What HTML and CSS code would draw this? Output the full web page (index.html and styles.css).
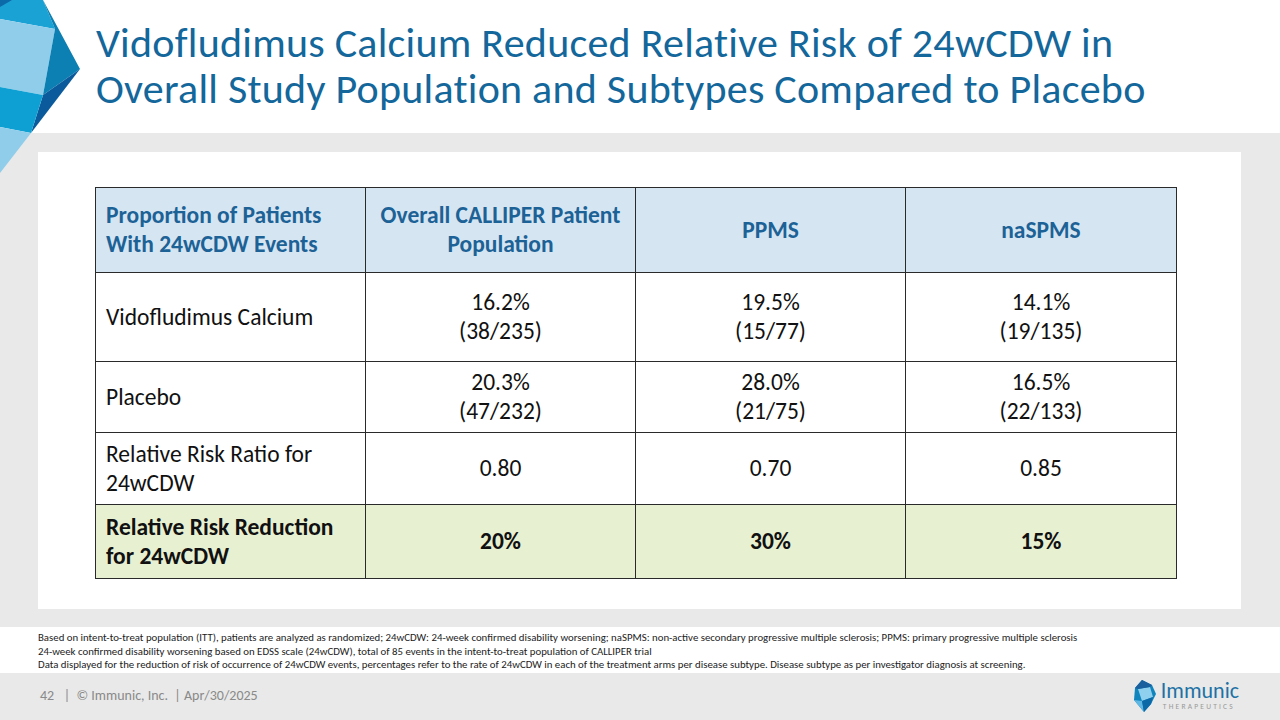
FILE: index.html
```html
<!DOCTYPE html>
<html>
<head>
<meta charset="utf-8">
<link rel="stylesheet" href="styles.css">
</head>
<body>
<div class="slide">
  <header class="top">
    <svg class="deco" width="90" height="180" viewBox="0 0 90 180">
      <polygon points="0,0 43,0 55,29 0,19" fill="#1ba2d5"/>
      <polygon points="0,0 12,0 0,7" fill="#0c6aa8"/>
      <polygon points="0,19 55,29 43,95 0,87" fill="#8fcdeb"/>
      <polygon points="55,29 43,0 80,69 43,95" fill="#0d80b3"/>
      <polygon points="43,95 80,69 31,133" fill="#0b5b9c"/>
      <polygon points="0,87 43,95 31,133 0,127" fill="#0fa0d3"/>
      <polygon points="0,127 31,133 0,173" fill="#8fcdeb"/>
    </svg>
    <h1 class="title">Vidofludimus Calcium Reduced Relative Risk of 24wCDW in<br>Overall Study Population and Subtypes Compared to Placebo</h1>
  </header>
  <main class="body">
    <section class="card">
      <table class="data">
        <colgroup>
          <col class="c1"><col class="c2"><col class="c3"><col class="c4">
        </colgroup>
        <thead>
          <tr class="r0">
            <th class="left">Proportion of Patients<br>With 24wCDW Events</th>
            <th>Overall CALLIPER Patient<br>Population</th>
            <th>PPMS</th>
            <th>naSPMS</th>
          </tr>
        </thead>
        <tbody>
          <tr class="r1">
            <td class="left">Vidofludimus Calcium</td>
            <td>16.2%<br>(38/235)</td>
            <td>19.5%<br>(15/77)</td>
            <td>14.1%<br>(19/135)</td>
          </tr>
          <tr class="r2">
            <td class="left">Placebo</td>
            <td>20.3%<br>(47/232)</td>
            <td>28.0%<br>(21/75)</td>
            <td>16.5%<br>(22/133)</td>
          </tr>
          <tr class="r3">
            <td class="left">Relative Risk Ratio for<br>24wCDW</td>
            <td>0.80</td>
            <td>0.70</td>
            <td>0.85</td>
          </tr>
          <tr class="r4">
            <td class="left">Relative Risk Reduction<br>for 24wCDW</td>
            <td>20%</td>
            <td>30%</td>
            <td>15%</td>
          </tr>
        </tbody>
      </table>
    </section>
  </main>
  <section class="notes">
    <p>Based on intent-to-treat population (ITT), patients are analyzed as randomized; 24wCDW: 24-week confirmed disability worsening; naSPMS: non-active secondary progressive multiple sclerosis; PPMS: primary progressive multiple sclerosis</p>
    <p>24-week confirmed disability worsening based on EDSS scale (24wCDW), total of 85 events in the intent-to-treat population of CALLIPER trial</p>
    <p>Data displayed for the reduction of risk of occurrence of 24wCDW events, percentages refer to the rate of 24wCDW in each of the treatment arms per disease subtype. Disease subtype as per investigator diagnosis at screening.</p>
  </section>
  <footer class="foot">
    <div class="pageinfo">42&nbsp;&nbsp; |&nbsp; © Immunic, Inc.&nbsp; | Apr/30/2025</div>
    <div class="logo">
      <svg class="logo-icon" width="22" height="32" viewBox="0 0 22 32">
        <polygon points="8,0 18,5 22,14 17,24 10,32 0,20 1,8" fill="#0f84bd"/>
        <polygon points="4,9 16,7 19,17 8,21" fill="#8fd0ee"/>
        <polygon points="8,0 18,5 16,7 4,9 1,8" fill="#1a5f9e"/>
        <polygon points="0,20 8,21 10,32" fill="#5fb8e3"/>
        <polygon points="8,21 19,17 17,24 10,32" fill="#0b69a8"/>
      </svg>
      <div class="logo-text">
        <span class="logo-name">Immunic</span>
        <span class="logo-sub">THERAPEUTICS</span>
      </div>
    </div>
  </footer>
</div>
</body>
</html>
```

FILE: styles.css
```css
* { box-sizing: border-box; }
html, body { margin: 0; padding: 0; }
body {
  width: 1280px;
  height: 720px;
  overflow: hidden;
  font-family: "Carlito", "Calibri", "Lato", sans-serif;
  background: #e8e9e8;
}
.slide {
  width: 1280px;
  height: 720px;
  display: flex;
  flex-direction: column;
}
.top {
  position: relative;
  height: 133px;
  background: #ffffff;
  padding: 20px 0 0 96px;
}
.deco {
  position: absolute;
  left: 0;
  top: 0;
}
.title {
  margin: 0;
  font-weight: 400;
  font-size: 42px;
  line-height: 46px;
  letter-spacing: 0.25px;
  color: #13679b;
}
.body {
  height: 494px;
  padding: 19px 39px 0 38px;
}
.card {
  background: #ffffff;
  height: 457px;
  padding: 35px 0 0 57px;
}
.data {
  border-collapse: collapse;
  width: 1081px;
  table-layout: fixed;
  font-size: 23.5px;
  color: #111;
}
.c1, .c2, .c3 { width: 270px; }
.c4 { width: 271px; }
.data th, .data td {
  border: 1px solid #2a2a2a;
  text-align: center;
  vertical-align: middle;
  padding: 0 10px;
  line-height: 29px;
}
.data th {
  background: #d5e6f2;
  color: #1d6296;
  font-weight: 700;
  font-size: 23.5px;
}
.data .left { text-align: left; }
.r0 { height: 85px; }
.r1 { height: 89px; }
.r2 { height: 71px; }
.r3 { height: 72px; }
.r4 { height: 74px; }
.r4 td {
  background: #e8f0d2;
  font-weight: 700;
}
.notes {
  margin-top: 0;
  background: #ffffff;
  height: 46px;
  padding: 4px 0 0 38px;
  font-size: 10.8px;
  line-height: 13.5px;
  color: #222;
}
.notes p { margin: 0; white-space: nowrap; }
.foot {
  flex: 1;
  display: flex;
  justify-content: space-between;
  align-items: center;
  padding: 0 40px 0 40px;
}
.pageinfo {
  font-size: 14px;
  color: #8a8a8a;
  padding-bottom: 2px;
}
.logo {
  display: flex;
  align-items: center;
  gap: 5px;
  padding-bottom: 1px;
  margin-right: 1px;
}
.logo-text {
  display: flex;
  flex-direction: column;
  align-items: flex-start;
}
.logo-name {
  font-size: 22px;
  line-height: 20px;
  color: #1d72a6;
}
.logo-sub {
  font-size: 7.5px;
  line-height: 9px;
  margin-top: 1px;
  letter-spacing: 2.2px;
  color: #9a9a9a;
  padding-left: 2px;
}
```
